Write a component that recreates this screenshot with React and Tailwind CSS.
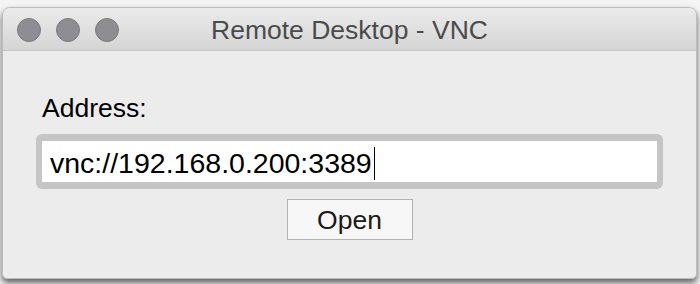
export default function App() {
  const font = { fontFamily: '"Liberation Sans", Arial, sans-serif' };
  return (
    <div className="w-[700px] h-[284px] bg-[#f4f4f4] overflow-hidden pt-[7px]" style={font}>
      <div className="ml-[2px] w-[695px] h-[272px] flex flex-col bg-[#ececec] border border-[#bdbdbd] rounded-t-[8px] rounded-b-[5px] shadow-[0_4px_6px_rgba(0,0,0,0.6)] overflow-hidden">
        <div className="h-[43px] shrink-0 grid grid-cols-[1fr_auto_1fr] items-center pt-[1px] border-b border-[#c3c3c3] bg-gradient-to-b from-[#ebebeb] to-[#d5d5d5]">
          <div className="flex items-center gap-[15px] pl-[14px]">
            <div className="w-6 h-6 rounded-full bg-[#8e8d92] border border-[#7b7a7f]" />
            <div className="w-6 h-6 rounded-full bg-[#8e8d92] border border-[#7b7a7f]" />
            <div className="w-6 h-6 rounded-full bg-[#8e8d92] border border-[#7b7a7f]" />
          </div>
          <div className="text-[26.5px] leading-[26px] text-[#4b4b4b] whitespace-nowrap">Remote Desktop - VNC</div>
          <div />
        </div>
        <div className="flex-1 flex flex-col px-[33px]">
          <div className="mt-[44px] pl-[6px] text-[26.5px] leading-[26px] text-black">Address:</div>
          <div className="mt-[13px] h-[55px] rounded-[6px] bg-[#c5c5c5] px-[6px] py-[7px]">
            <div className="h-[41px] bg-white pl-[8px] flex items-start">
              <div className="mt-[3px] text-[28.5px] leading-[38px] text-black whitespace-nowrap flex items-center">
                <span>vnc://192.168.0.200:3389</span>
                <span className="inline-block w-[1.5px] h-[33px] bg-black ml-[2px]" />
              </div>
            </div>
          </div>
          <div className="mt-[10px] self-center w-[126px] h-[41px] bg-[#f7f7f7] border-[1.5px] border-[#b2b2b2] flex justify-center pt-[3px]">
            <span className="text-[26.5px] leading-[34px] text-[#1a1a1a]">Open</span>
          </div>
        </div>
      </div>
    </div>
  );
}
